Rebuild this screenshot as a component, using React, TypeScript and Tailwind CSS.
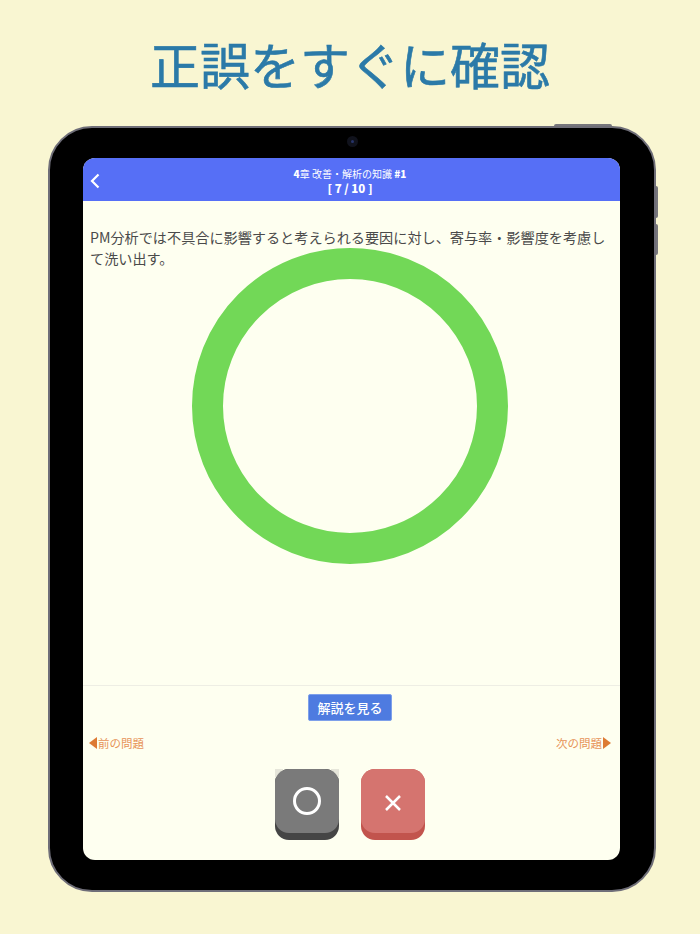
export default function App() {
  const jp = { fontFamily: '"Noto Sans CJK JP", "Noto Sans", sans-serif' };
  return (
    <div style={jp} className="w-[700px] h-[934px] bg-[#f9f6d2] flex flex-col items-center overflow-hidden">
      <h1 className="mt-[32px] h-[62px] leading-[62px] text-[50px] font-normal [-webkit-text-stroke:0.6px_#2b7aa8] text-[#2b7aa8] text-center whitespace-nowrap">正誤をすぐに確認</h1>
      <div className="relative mt-[32px] ml-[4px] w-[608px] h-[766px] bg-black rounded-[44px] border-[2px] border-[#6f6e78] px-[33px] pt-[30px]">
        <div className="absolute top-[-4px] right-[42px] w-[58px] h-[2px] bg-[#77767c] rounded-t-[2px]" />
        <div className="absolute right-[-4px] top-[58px] w-[2px] h-[32px] bg-[#77767c] rounded-r-[2px]" />
        <div className="absolute right-[-4px] top-[96px] w-[2px] h-[31px] bg-[#77767c] rounded-r-[2px]" />
        <div className="absolute top-[8px] left-[297px] w-[11px] h-[11px] rounded-full bg-[#10121c] flex items-center justify-center">
          <div className="w-[3px] h-[3px] rounded-full bg-[#27346b]" />
        </div>
        <div className="relative w-[537px] h-[702px] bg-[#fefff0] rounded-[12px] overflow-hidden flex flex-col">
          <div className="relative h-[43px] bg-[#566ff6] text-white flex flex-col items-center justify-center shrink-0 pt-[3px] pr-[3px]">
            <svg className="absolute left-[6px] top-[15px]" width="12" height="16" viewBox="0 0 12 16" fill="none">
              <path d="M9.5 1.5 L3 8 L9.5 14.5" stroke="#fff" strokeWidth="2.2" />
            </svg>
            <div className="text-[10px] leading-[15px] whitespace-nowrap"><span className="font-black">4</span>章 改善・解析の知識 <span className="font-black">#1</span></div>
            <div className="text-[11.5px] leading-[15px] font-black whitespace-nowrap">[ 7 / 10 ]</div>
          </div>
          <div className="relative flex-1">
            <p className="px-[7px] pt-[26px] text-[14.15px] leading-[21px] text-[#4a4a4a]">PM分析では不具合に影響すると考えられる要因に対し、寄与率・影響度を考慮して洗い出す。</p>
            <div className="absolute left-[109px] top-[47px] w-[316px] h-[316px] rounded-full border-[31.5px] border-[#72d857]" />
          </div>
          <div className="shrink-0 border-t border-[#eeeee4] h-[175px] flex flex-col items-center">
            <button className="mt-[8px] -ml-[3px] w-[84px] h-[27px] rounded-[2px] bg-[#4e7be0] border border-[#7ea0ea] text-white text-[13px] leading-none font-medium flex items-center justify-center">解説を見る</button>
            <div className="mt-[14px] h-[16px] w-full pl-[6px] pr-[9px] flex items-center justify-between text-[11.5px] leading-[16px] text-[#e79358]">
              <div className="flex items-center">
                <svg width="8" height="12" viewBox="0 0 8 12"><path d="M8 0 V12 L0 6 Z" fill="#dd7a33" /></svg>
                <span className="ml-[1px]">前の問題</span>
              </div>
              <div className="flex items-center">
                <span className="mr-[1px]">次の問題</span>
                <svg width="8" height="12" viewBox="0 0 8 12"><path d="M0 0 V12 L8 6 Z" fill="#dd7a33" /></svg>
              </div>
            </div>
            <div className="mt-[18px] -ml-[3px] flex gap-[22px]">
              <div className="w-[64px] h-[71px] rounded-[14px] bg-[#454545] relative">
                <div className="absolute top-0 left-0 w-[8px] h-[8px] bg-[#e6e6da]" />
                <div className="absolute top-0 right-0 w-[8px] h-[8px] bg-[#e6e6da]" />
                <div className="relative w-[64px] h-[64px] rounded-[14px] bg-[#7a7a7a] flex items-center justify-center">
                  <div className="w-[28px] h-[28px] rounded-full border-[3px] border-white" />
                </div>
              </div>
              <div className="w-[64px] h-[71px] rounded-[14px] bg-[#c2544d]">
                <div className="w-[64px] h-[64px] rounded-[14px] bg-[#d5746f] flex items-center justify-center">
                  <svg width="18" height="18" viewBox="0 0 18 18" className="mt-[3px]"><path d="M2 2 L16 16 M16 2 L2 16" stroke="#fff" strokeWidth="2.5" /></svg>
                </div>
              </div>
            </div>
          </div>
        </div>
      </div>
    </div>
  );
}
